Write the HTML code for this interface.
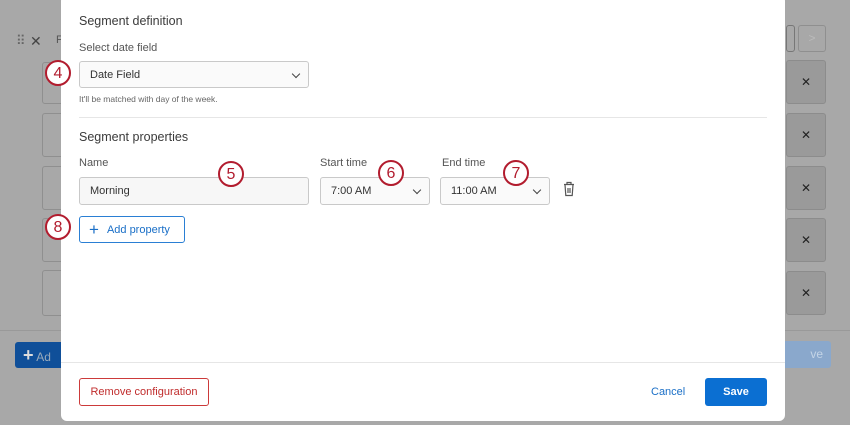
<html><head><style>
body{margin:0;width:850px;height:425px;overflow:hidden;background:#a8a8a8;font-family:"Liberation Sans",sans-serif;position:relative}
.a{position:absolute}
.box{position:absolute;border:1px solid #8f8f8f;border-radius:3px;box-sizing:border-box}
.rb{position:absolute;left:786px;width:40px;height:44px;background:#9a9a9a;border:1px solid #8c8c8c;border-radius:3px;box-sizing:border-box;font-size:12px;color:#222;text-align:center;line-height:42px}
.modal{position:absolute;left:61px;top:-5px;width:724px;height:426px;background:#fff;border-radius:6px}
.t{position:absolute;color:#3b3b3b}
.inp{position:absolute;border:1px solid #c9c9c9;border-radius:3px;background:#f7f7f7;box-sizing:border-box;font-size:11px;color:#333;padding-left:10px;line-height:26px}
.chev{position:absolute;right:9px;top:9px;width:5px;height:5px;border-right:1.3px solid #444;border-bottom:1.3px solid #444;transform:rotate(45deg)}
.c{position:absolute;width:26px;height:26px;border:2px solid #b21c2e;border-radius:50%;background:#fff;box-sizing:border-box;color:#b21c2e;font-size:16px;text-align:center;line-height:23px}
</style></head><body>
<div class="a" style="left:16px;top:33px;color:#666;font-size:13px;letter-spacing:-1px">⠿</div>
<div class="a" style="left:30px;top:33px;color:#444;font-size:14px">✕</div>
<div class="a" style="left:56px;top:34px;color:#555;font-size:11px">F</div>
<div class="box" style="left:42px;top:62px;width:30px;height:42px"></div>
<div class="box" style="left:42px;top:113px;width:30px;height:44px"></div>
<div class="box" style="left:42px;top:166px;width:30px;height:44px"></div>
<div class="box" style="left:42px;top:218px;width:30px;height:44px"></div>
<div class="box" style="left:42px;top:270px;width:30px;height:46px"></div>
<div class="a" style="left:0;top:330px;width:850px;height:1px;background:#999"></div>
<div class="a" style="left:15px;top:342px;width:50px;height:26px;background:#0f4f99;border-radius:3px;color:#9ab;font-size:12px;line-height:26px"><b style="color:#ddd;font-size:18px;margin-left:8px">+</b> Ad</div>
<div class="a" style="left:770px;top:341px;width:61px;height:27px;background:#8aa8cc;border-radius:3px;color:#c4d4e6;font-size:12px;line-height:27px;text-align:right;padding-right:8px;box-sizing:border-box">ve</div>
<div class="box" style="left:786px;top:25px;width:9px;height:27px;border-color:#777"></div>
<div class="box" style="left:798px;top:25px;width:28px;height:27px;color:#bbb;font-size:12px;text-align:center;line-height:25px">&gt;</div>
<div class="rb" style="top:60px">✕</div><div class="rb" style="top:113px">✕</div><div class="rb" style="top:166px">✕</div><div class="rb" style="top:218px">✕</div><div class="rb" style="top:271px">✕</div>
<div class="modal">
<div class="t" style="left:18px;top:19px;font-size:12.5px">Segment definition</div>
<div class="t" style="left:18px;top:47px;font-size:11px;color:#555">Select date field</div>
<div class="inp" style="left:18px;top:66px;width:230px;height:27px;background:#fafafa">Date Field<div class="chev"></div></div>
<div class="t" style="left:18px;top:99px;font-size:8.5px;color:#666">It'll be matched with day of the week.</div>
<div class="a" style="left:18px;top:122px;width:688px;height:1px;background:#e6e6e6"></div>
<div class="t" style="left:18px;top:135px;font-size:12.5px">Segment properties</div>
<div class="t" style="left:18px;top:162px;font-size:11px;color:#555">Name</div>
<div class="t" style="left:259px;top:162px;font-size:11px;color:#555">Start time</div>
<div class="t" style="left:381px;top:162px;font-size:11px;color:#555">End time</div>
<div class="inp" style="left:18px;top:182px;width:230px;height:28px">Morning</div>
<div class="inp" style="left:259px;top:182px;width:110px;height:28px;background:#fafafa">7:00 AM<div class="chev"></div></div>
<div class="inp" style="left:379px;top:182px;width:110px;height:28px;background:#fafafa">11:00 AM<div class="chev"></div></div>
<svg class="a" style="left:502px;top:186px" width="12" height="16" viewBox="0 0 12 16" fill="none" stroke="#555" stroke-width="1.2"><path d="M1 3.5h10M4 3.5V1.5h4v2M2 3.5l.8 11h6.4l.8-11M5 7v5M7 7v5"/></svg>
<div class="a" style="left:18px;top:221px;width:106px;height:27px;border:1px solid #2a7fd4;border-radius:3px;box-sizing:border-box;color:#1a6fc7;font-size:11px;line-height:25px"><span style="font-size:17px;margin:0 8px 0 9px;vertical-align:-2px">+</span>Add property</div>
<div class="a" style="left:0;top:367px;width:724px;height:1px;background:#e6e6e6"></div>
<div class="a" style="left:18px;top:383px;width:130px;height:28px;border:1px solid #cc3a3a;border-radius:3px;box-sizing:border-box;color:#c02c2c;font-size:11px;text-align:center;line-height:26px">Remove configuration</div>
<div class="a" style="left:590px;top:391px;color:#1a6fc7;font-size:11px">Cancel</div>
<div class="a" style="left:644px;top:383px;width:62px;height:28px;background:#0b6fd2;border-radius:3px;color:#fff;font-size:11px;font-weight:bold;text-align:center;line-height:28px">Save</div>
</div>
<div class="c" style="left:45px;top:60px">4</div>
<div class="c" style="left:218px;top:161px">5</div>
<div class="c" style="left:378px;top:160px">6</div>
<div class="c" style="left:503px;top:160px">7</div>
<div class="c" style="left:45px;top:214px">8</div>
</body></html>
